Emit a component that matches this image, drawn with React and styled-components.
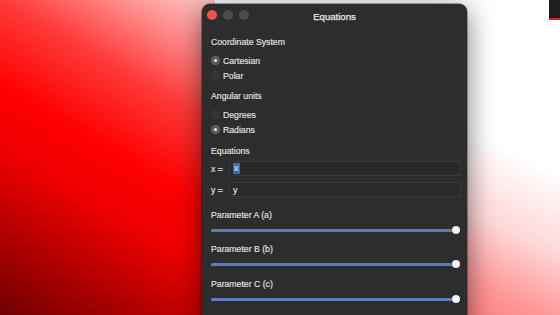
import React, { useState } from "react";
import styled, { createGlobalStyle } from "styled-components";

const GlobalStyle = createGlobalStyle`
  html, body {
    margin: 0;
    padding: 0;
    overflow: hidden;
  }
  body {
    font-family: "Liberation Sans", Arial, sans-serif;
  }
`;

const Desktop = styled.div`
  position: relative;
  width: 560px;
  height: 315px;
  overflow: hidden;
  box-sizing: border-box;
  padding: 4px 0 0 202px;
  background:
    linear-gradient(205deg, #ffffff 0%, #ffffff 48%, #ffd8d8 70%, #ff9a9a 88%, #ff8080 100%) right top / 100px 100% no-repeat,
    linear-gradient(210deg, #ffc8c8 0%, #ff9a9a 10%, #ff3a3a 28%, #ff0000 48%, #ee0000 62%, #c00000 76%, #700000 100%) left top / 215px 100% no-repeat;
`;

const CornerBlock = styled.div`
  position: absolute;
  top: 0;
  right: 0;
  width: 11px;
  height: 18px;
  background: #1e1e1e;
  border-bottom: 2px solid #e02020;
`;

const Window = styled.div`
  width: 265px;
  height: 330px;
  background: #2d2d2d;
  border-radius: 8px 8px 0 0;
  box-shadow: 0 6px 28px rgba(0, 0, 0, 0.55), 0 0 0 0.5px rgba(0, 0, 0, 0.6);
  color: #e4e4e4;
  font-size: 8.7px;
  -webkit-text-stroke: 0.15px #e4e4e4;
`;

const TitleBar = styled.div`
  position: relative;
  height: 23px;
  display: flex;
  align-items: center;
  justify-content: center;
`;

const Lights = styled.div`
  position: absolute;
  left: 5px;
  top: 6px;
  display: flex;
  gap: 6px;
`;

const Light = styled.span`
  width: 10px;
  height: 10px;
  border-radius: 50%;
  background: ${(p) => p.$color};
`;

const Title = styled.div`
  font-size: 9.6px;
  color: #e8e8e8;
  -webkit-text-stroke: 0.25px #e8e8e8;
  padding-top: 1px;
`;

const Content = styled.div`
  padding: 8px 6px 0 9px;
`;

const Section = styled.div`
  margin-top: ${(p) => p.$gap || 0}px;
`;

const Heading = styled.div`
  height: 14px;
  line-height: 14px;
`;

const RadioList = styled.div`
  margin-top: 4px;
  display: flex;
  flex-direction: column;
`;

const RadioRow = styled.label`
  height: 15px;
  display: flex;
  align-items: center;
  gap: 3px;
  cursor: default;
`;

const RadioDot = styled.span`
  width: 9px;
  height: 9px;
  border-radius: 50%;
  box-sizing: border-box;
  background: ${(p) => (p.$on ? "#5a5a5a" : "#353535")};
  box-shadow: inset 0 0 0 0.5px ${(p) => (p.$on ? "#666" : "#3d3d3d")};
  display: flex;
  align-items: center;
  justify-content: center;
  &::after {
    content: "";
    width: 3px;
    height: 3px;
    border-radius: 50%;
    background: #f2f2f2;
    display: ${(p) => (p.$on ? "block" : "none")};
  }
`;

const EqRow = styled.div`
  display: flex;
  align-items: center;
  height: 15px;
  margin-top: ${(p) => p.$gap}px;
`;

const EqLabel = styled.span`
  width: 18px;
  flex-shrink: 0;
`;

const EqField = styled.div`
  flex: 1;
  height: 15px;
  box-sizing: border-box;
  border: 1px solid #3a3a3a;
  background: #2a2a2a;
  display: flex;
  align-items: center;
  padding-left: 3px;
  color: #e6e6e6;
  font-size: 9px;
`;

const Selected = styled.span`
  background: #3f6ea6;
  padding: 0 1px;
  line-height: 11px;
`;

const SliderRow = styled.div`
  height: 14px;
  margin-top: 1px;
  display: flex;
  align-items: center;
  padding-right: 5px;
`;

const Track = styled.div`
  position: relative;
  flex: 1;
  height: 3px;
  border-radius: 2px;
  background: #4a4a4a;
`;

const Fill = styled.div`
  height: 100%;
  border-radius: 2px;
  background: #5b80b0;
`;

const Thumb = styled.span`
  position: absolute;
  top: 50%;
  width: 8px;
  height: 8px;
  border-radius: 50%;
  background: #f4f4f4;
  box-shadow: 0 0 0 0.5px rgba(0, 0, 0, 0.4);
  transform: translate(-50%, -50%);
`;

function Radio({ label, on, onPick }) {
  return (
    <RadioRow onClick={onPick}>
      <RadioDot $on={on} />
      <span>{label}</span>
    </RadioRow>
  );
}

function Slider({ value }) {
  return (
    <SliderRow>
      <Track>
        <Fill style={{ width: `${value * 100}%` }} />
        <Thumb style={{ left: `${value * 100}%` }} />
      </Track>
    </SliderRow>
  );
}

const params = [
  { label: "Parameter A (a)", value: 1, gap: 11 },
  { label: "Parameter B (b)", value: 1, gap: 5 },
  { label: "Parameter C (c)", value: 1, gap: 6 },
];

export default function App() {
  const [system, setSystem] = useState("cartesian");
  const [units, setUnits] = useState("radians");

  return (
    <Desktop>
      <GlobalStyle />
      <CornerBlock />
      <Window>
        <TitleBar>
          <Lights>
            <Light $color="#f0524c" />
            <Light $color="#4b4b4b" />
            <Light $color="#4b4b4b" />
          </Lights>
          <Title>Equations</Title>
        </TitleBar>
        <Content>
          <Section>
            <Heading>Coordinate System</Heading>
            <RadioList>
              <Radio label="Cartesian" on={system === "cartesian"} onPick={() => setSystem("cartesian")} />
              <Radio label="Polar" on={system === "polar"} onPick={() => setSystem("polar")} />
            </RadioList>
          </Section>
          <Section $gap={6}>
            <Heading>Angular units</Heading>
            <RadioList>
              <Radio label="Degrees" on={units === "degrees"} onPick={() => setUnits("degrees")} />
              <Radio label="Radians" on={units === "radians"} onPick={() => setUnits("radians")} />
            </RadioList>
          </Section>
          <Section $gap={7}>
            <Heading>Equations</Heading>
            <EqRow $gap={3}>
              <EqLabel>x =</EqLabel>
              <EqField>
                <Selected>x</Selected>
              </EqField>
            </EqRow>
            <EqRow $gap={6}>
              <EqLabel>y =</EqLabel>
              <EqField>y</EqField>
            </EqRow>
          </Section>
          {params.map((p) => (
            <Section key={p.label} $gap={p.gap}>
              <Heading>{p.label}</Heading>
              <Slider value={p.value} />
            </Section>
          ))}
        </Content>
      </Window>
    </Desktop>
  );
}
